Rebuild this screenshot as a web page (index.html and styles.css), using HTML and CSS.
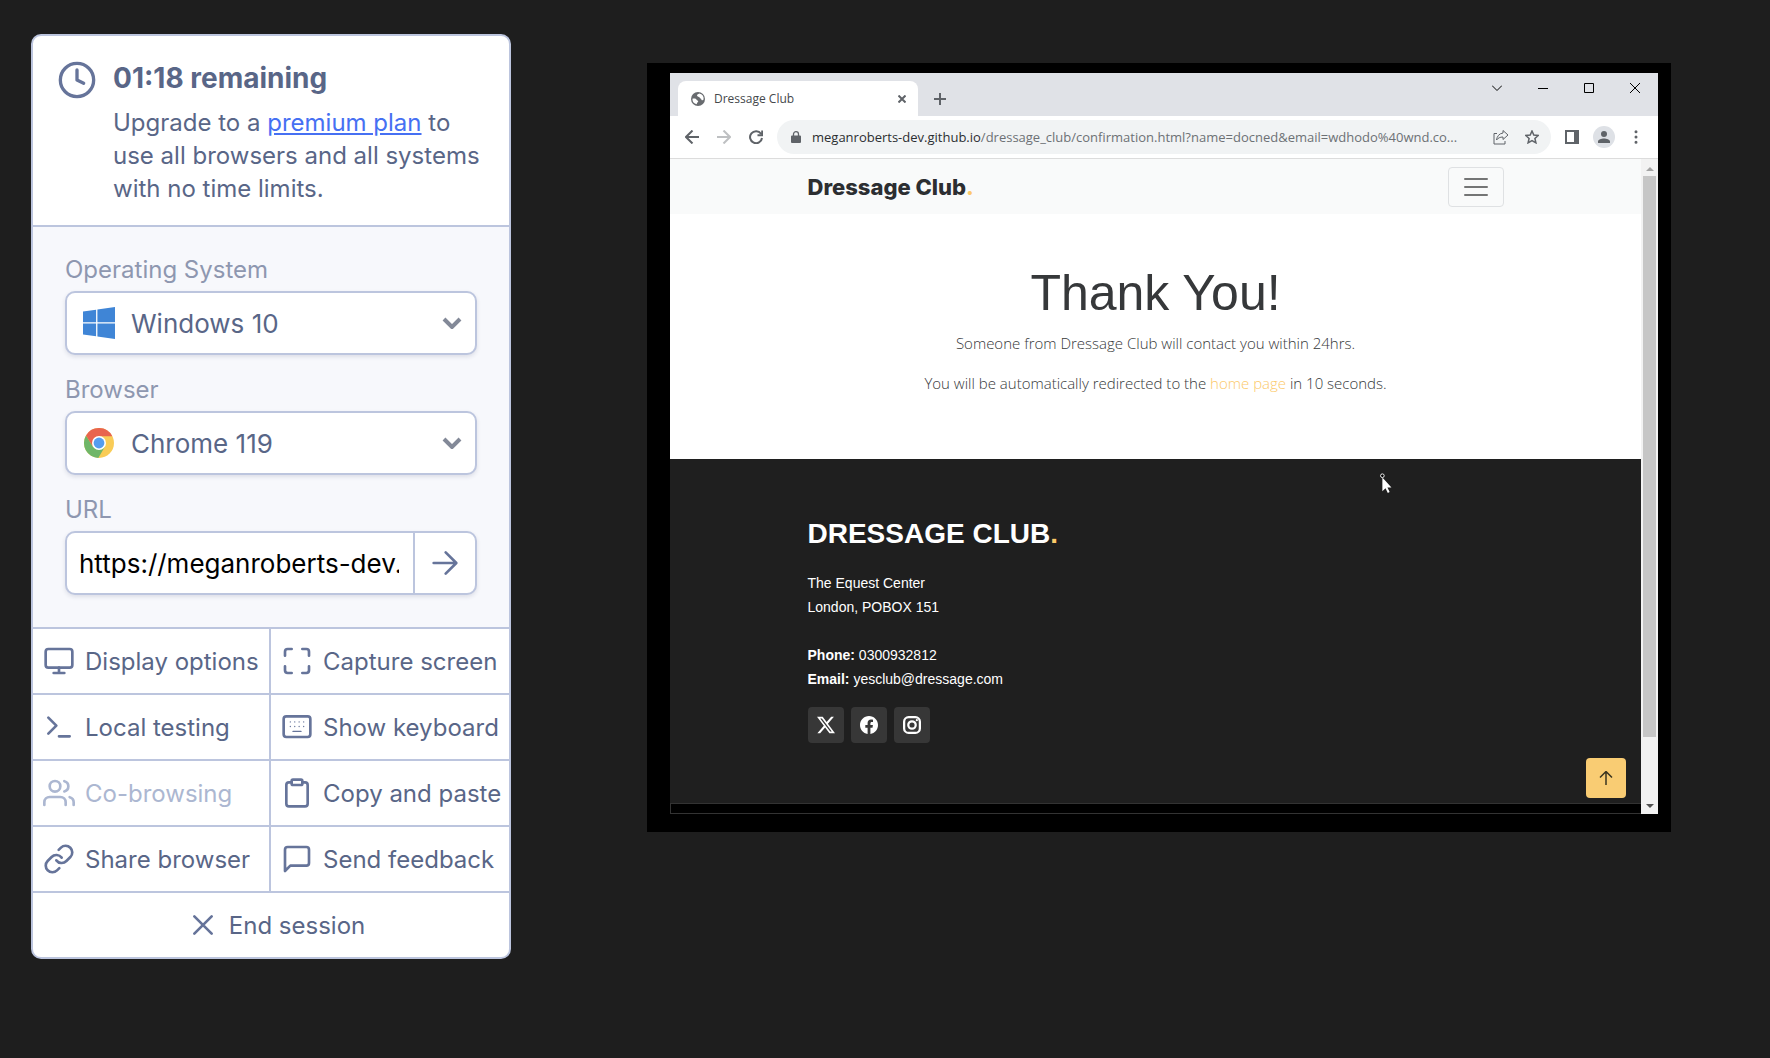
FILE: index.html
```html
<!DOCTYPE html>
<html lang="en">
<head>
<meta charset="utf-8">
<title>Live browser session</title>
<meta name="viewport" content="width=device-width, initial-scale=1">
<link rel="stylesheet" href="styles.css">
</head>
<body class="session">
<aside class="panel">
  <section class="notice">
    <svg class="notice-icon" viewBox="0 0 24 24"><circle cx="12" cy="12" r="10"/><path d="M12 6v6l4 2"/></svg>
    <div class="notice-body">
      <h1 class="notice-title">01:18 remaining</h1>
      <p class="notice-text">Upgrade to a <a class="notice-link" href="#">premium plan</a> to use all browsers and all systems with no time limits.</p>
    </div>
  </section>

  <form class="settings">
    <div class="field">
      <label class="label" for="os">Operating System</label>
      <div class="control">
        <svg class="logo" viewBox="0 0 32 32"><path fill="#3f85d6" d="M0 4.600 13.100 2.800V15.300H0zM14.400 2.600 32 0V15.300H14.400zM0 16.600H13.100V29.200L0 27.400zM14.400 16.600H32V32L14.400 29.400z"/></svg>
        <select class="select" id="os"><option>Windows 10</option></select>
        <svg class="chevron" viewBox="0 0 20 12"><path d="M2 2l8 8 8-8"/></svg>
      </div>
    </div>
    <div class="field">
      <label class="label" for="browser">Browser</label>
      <div class="control">
        <svg class="logo" viewBox="0 0 32 32"><circle cx="16" cy="16" r="15" fill="#f9cc57"/><path fill="#e8644f" d="M16 16 3 8.500A15 15 0 0 1 29.300 9.200H16z"/><path fill="#6fb668" d="M16 16 9.900 19.500 3 8.500A15 15 0 0 0 15.300 31L22 19.500z"/><path fill="#e8644f" d="M3 8.500 9.900 19.500 12 12z"/><circle cx="16" cy="16" r="7" fill="#fff"/><circle cx="16" cy="16" r="5.400" fill="#559df0"/></svg>
        <select class="select" id="browser"><option>Chrome 119</option></select>
        <svg class="chevron" viewBox="0 0 20 12"><path d="M2 2l8 8 8-8"/></svg>
      </div>
    </div>
    <div class="field">
      <label class="label" for="url">URL</label>
      <div class="control control-url">
        <input class="url" id="url" type="text" value="https://meganroberts-dev.github.io/dressage_club/">
        <button class="go" type="button" aria-label="Go"><svg class="icon" viewBox="0 0 24 24"><path d="M3.500 12h16.500M12.500 4l8 8-8 8"/></svg></button>
      </div>
    </div>
  </form>

  <div class="actions">
    <button class="action" type="button"><svg class="icon" viewBox="0 0 24 24"><rect x="2" y="3" width="20" height="14" rx="2"/><path d="M8 21h8M12 17v4"/></svg>Display options</button>
    <button class="action" type="button"><svg class="icon" viewBox="0 0 24 24"><path d="M8 3H5a2 2 0 0 0-2 2v3M21 8V5a2 2 0 0 0-2-2h-3M16 21h3a2 2 0 0 0 2-2v-3M3 16v3a2 2 0 0 0 2 2h3"/></svg>Capture screen</button>
    <button class="action" type="button"><svg class="icon" viewBox="0 0 24 24"><path d="M4 17l6-6-6-6M12 19h8"/></svg>Local testing</button>
    <button class="action" type="button"><svg class="icon" viewBox="0 0 24 24"><rect x="2" y="4" width="20" height="15.500" rx="2"/><path class="keys" d="M7 8.200h.01M10.300 8.200h.01M13.600 8.200h.01M17 8.200h.01M7 11.600h.01M10.300 11.600h.01M13.600 11.600h.01M17 11.600h.01M9 15.300h6"/></svg>Show keyboard</button>
    <button class="action" type="button" disabled><svg class="icon" viewBox="0 0 24 24"><path d="M17 21v-2a4 4 0 0 0-4-4H5a4 4 0 0 0-4 4v2M23 21v-2a4 4 0 0 0-3-3.870M16 3.130a4 4 0 0 1 0 7.750"/><circle cx="9" cy="7" r="4"/></svg>Co-browsing</button>
    <button class="action" type="button"><svg class="icon" viewBox="0 0 24 24"><path d="M16 4h2a2 2 0 0 1 2 2v14a2 2 0 0 1-2 2H6a2 2 0 0 1-2-2V6a2 2 0 0 1 2-2h2"/><rect x="8" y="2" width="8" height="4" rx="1"/></svg>Copy and paste</button>
    <button class="action" type="button"><svg class="icon" viewBox="0 0 24 24"><path d="M10 13a5 5 0 0 0 7.540.540l3-3a5 5 0 0 0-7.070-7.070l-1.720 1.710M14 11a5 5 0 0 0-7.540-.540l-3 3a5 5 0 0 0 7.070 7.070l1.710-1.710"/></svg>Share browser</button>
    <button class="action" type="button"><svg class="icon" viewBox="0 0 24 24"><path d="M21 15a2 2 0 0 1-2 2H7l-4 4V5a2 2 0 0 1 2-2h14a2 2 0 0 1 2 2z"/></svg>Send feedback</button>
    <button class="action action-end" type="button"><svg class="icon" viewBox="0 0 24 24"><path d="M18.500 5.500l-13 13M5.500 5.500l13 13"/></svg>End session</button>
  </div>
</aside>

<main class="screen">
  <div class="window">
    <div class="tabstrip">
      <div class="tab">
        <svg class="tab-icon" viewBox="0 0 14 14"><circle cx="7" cy="7" r="7" fill="#686b6f"/><path fill="#fff" d="M8.200 1.400c-.9.700-2 .9-2.200 2 .2 1.300 2.300 1 2.600 2.200.1 1 1.700.9 1.800 2 0 1.300 1.100.6 2.200-.2A5.600 5.600 0 0 0 8.200 1.400zM1.400 6.800c1.500-.3 3.600-.4 4 .8.200.9 1.800.8 1.800 2 0 .9-1.500.8-1.400 2.700A5.600 5.600 0 0 1 1.400 6.800z"/></svg>
        <span class="tab-title">Dressage Club</span>
        <button class="chrome-btn" type="button" aria-label="Close tab"><svg class="glyph-8" viewBox="0 0 8 8"><path d="M.5.500l7 7M7.500.500l-7 7"/></svg></button>
      </div>
      <button class="chrome-btn new-tab" type="button" aria-label="New tab"><svg class="glyph-12" viewBox="0 0 12 12"><path d="M6 0v12M0 6h12"/></svg></button>
      <div class="window-controls">
        <button class="chrome-btn" type="button" aria-label="Search tabs"><svg class="glyph-10" viewBox="0 0 10 10"><path d="M0 2.500l5 5 5-5"/></svg></button>
        <button class="chrome-btn" type="button" aria-label="Minimize"><svg class="glyph-10" viewBox="0 0 10 10"><path d="M0 5.500h10"/></svg></button>
        <button class="chrome-btn" type="button" aria-label="Maximize"><svg class="glyph-10" viewBox="0 0 10 10"><path d="M.5.500h9v9h-9z"/></svg></button>
        <button class="chrome-btn" type="button" aria-label="Close"><svg class="glyph-10" viewBox="0 0 10 10"><path d="M0 0l10 10M10 0L0 10"/></svg></button>
      </div>
    </div>

    <div class="toolbar">
      <div class="history">
        <button class="chrome-btn" type="button" aria-label="Back"><svg class="glyph-14" viewBox="0 0 14 14"><path d="M14 7H1M7.500.500 1 7l6.500 6.500"/></svg></button>
        <button class="chrome-btn faded" type="button" aria-label="Forward"><svg class="glyph-14" viewBox="0 0 14 14"><path d="M0 7h13M6.500.500 13 7l-6.500 6.500"/></svg></button>
        <button class="chrome-btn" type="button" aria-label="Reload"><svg class="glyph-14" viewBox="0 0 14 14"><path d="M12 3.800A6 6 0 1 0 13 8M13.200.500v4.700H8.500"/></svg></button>
      </div>
      <div class="omnibox">
        <svg class="lock" viewBox="0 0 10 12"><path fill="#5f6368" d="M1 4.500h8a1 1 0 0 1 1 1V11a1 1 0 0 1-1 1H1a1 1 0 0 1-1-1V5.500a1 1 0 0 1 1-1z"/><path fill="none" stroke="#5f6368" stroke-width="1.300" d="M2.500 5V3a2.500 2.300 0 0 1 5 0v2"/></svg>
        <span class="address"><span class="host">meganroberts-dev.github.io</span>/dressage_club/confirmation.html?name=docned&amp;email=wdhodo%40wnd.co...</span>
        <div class="omnibox-actions">
          <button class="chrome-btn" type="button" aria-label="Share"><svg class="glyph-16 thin" viewBox="0 0 16 16"><path d="M4 4.500H1V15h11v-3M10 1.500l5 4.500-5 4.500V8c-3 0-5 1-6.500 3 .5-3.500 2.500-6.500 6.500-7z"/></svg></button>
          <button class="chrome-btn" type="button" aria-label="Bookmark"><svg class="glyph-14 star" viewBox="0 0 14 14"><path d="M7 1l1.800 4.100 4.400.4-3.300 3 1 4.300L7 10.500l-3.900 2.300 1-4.300-3.300-3 4.400-.4z"/></svg></button>
        </div>
      </div>
      <div class="extras">
        <button class="chrome-btn" type="button" aria-label="Side panel"><svg class="glyph-14" viewBox="0 0 14 14"><path d="M1 1h12v12H1z"/><path fill="#5f6368" d="M10 1h3v12h-3z"/></svg></button>
        <button class="chrome-btn avatar" type="button" aria-label="Profile"><svg class="glyph-12" viewBox="0 0 12 12"><path fill="#5f6368" stroke="none" d="M6 0a3 3 0 1 1 0 6 3 3 0 0 1 0-6zM0 12V10.500C0 8.500 3.500 7.500 6 7.500s6 1 6 3V12z"/></svg></button>
        <button class="chrome-btn" type="button" aria-label="Menu"><svg class="glyph-14" viewBox="0 0 14 14"><path fill="#5f6368" stroke="none" d="M7 .2a1.500 1.500 0 1 1 0 3 1.500 1.500 0 0 1 0-3zM7 5.500a1.500 1.500 0 1 1 0 3 1.500 1.500 0 0 1 0-3zM7 10.800a1.500 1.500 0 1 1 0 3 1.500 1.500 0 0 1 0-3z"/></svg></button>
      </div>
    </div>

    <div class="viewport">
      <div class="page">
        <header class="site-nav">
          <div class="container nav-row">
            <a class="brand" href="#">Dressage Club<span class="accent">.</span></a>
            <button class="toggler" type="button" aria-label="Toggle navigation"><svg class="toggler-icon" viewBox="0 0 24 20"><path d="M1 2h22M1 10h22M1 18h22"/></svg></button>
          </div>
        </header>
        <section class="thanks">
          <h2 class="thanks-title">Thank You!</h2>
          <p class="thanks-text">Someone from Dressage Club will contact you within 24hrs.</p>
          <p class="thanks-text">You will be automatically redirected to the <a class="accent" href="#">home page</a> in 10 seconds.</p>
        </section>
        <footer class="site-footer">
          <div class="container">
            <h3 class="footer-title">DRESSAGE CLUB<span class="accent">.</span></h3>
            <p class="footer-text">The Equest Center<br>London, POBOX 151<br><br><strong>Phone:</strong> 0300932812<br><strong>Email:</strong> yesclub@dressage.com</p>
            <div class="social">
              <a class="social-link" href="#" aria-label="X"><svg class="social-icon" viewBox="0 0 16 16"><path d="M12.600.750h2.450l-5.360 6.140L16 15.250h-4.940l-3.860-5.070-4.430 5.070H.320l5.730-6.570L0 .750h5.060l3.490 4.630zm-.860 13.030h1.360L4.320 2.150H2.860z"/></svg></a>
              <a class="social-link" href="#" aria-label="Facebook"><svg class="social-icon" viewBox="0 0 16 16"><path d="M16 8.050C16 3.600 12.420 0 8 0S0 3.600 0 8.050C0 12.070 2.930 15.400 6.750 16v-5.620H4.720V8.050h2.030V6.280c0-2.020 1.190-3.130 3.020-3.130.870 0 1.790.160 1.790.160v1.980h-1.010c-.990 0-1.300.620-1.300 1.260v1.500h2.220l-.350 2.330H9.250V16C13.070 15.400 16 12.070 16 8.050z"/></svg></a>
              <a class="social-link" href="#" aria-label="Instagram"><svg class="social-icon outlined" viewBox="0 0 16 16"><rect x="1" y="1" width="14" height="14" rx="4"/><circle cx="8" cy="8" r="3.300"/><circle class="dot" cx="12.300" cy="3.700" r="1"/></svg></a>
            </div>
          </div>
          <a class="back-top" href="#" aria-label="Back to top"><svg class="glyph-14 dark" viewBox="0 0 14 14"><path d="M7 14V.800M1 6.500l6-6 6 6"/></svg></a>
        </footer>
        <div class="taskbar"></div>
      </div>
      <div class="scrollbar">
        <svg class="scroll-arrow" viewBox="0 0 8 4"><path fill="#a3a3a3" d="M0 4l4-4 4 4z"/></svg>
        <div class="scroll-track"><div class="scroll-thumb"></div></div>
        <svg class="scroll-arrow" viewBox="0 0 8 4"><path fill="#505050" d="M0 0l4 4 4-4z"/></svg>
      </div>
    </div>
  </div>
  <svg class="cursor" viewBox="0 0 14 22"><circle cx="3" cy="3" r="2" fill="#000" stroke="#fff"/><path fill="#fff" d="M3 5v15l3.500-3.200L9 22l2-1-2.400-5H13z"/></svg>
</main>
</body>
</html>
```

FILE: styles.css
```css
* { box-sizing: border-box; }

.session {
  margin: 0;
  min-height: 100vh;
  padding: 34px 99px 34px 31px;
  display: grid;
  grid-template-columns: 480px minmax(0, 1fr);
  column-gap: 136px;
  align-items: start;
  background: #1e1e1e;
  color: #596687;
  font-family: Inter, sans-serif;
}

button, input, select {
  margin: 0;
  border: 0;
  padding: 0;
  background: none;
  color: inherit;
  font: inherit;
}

svg { display: block; flex: none; }

/* Control panel */
.panel {
  border: 2px solid #bcc5de;
  border-radius: 10px;
  overflow: hidden;
  background: #fff;
  font-size: 24px;
}

.icon, .notice-icon {
  width: 32px;
  height: 32px;
  fill: none;
  stroke: #66749a;
  stroke-width: 2;
  stroke-linecap: round;
  stroke-linejoin: round;
}

.notice { display: flex; gap: 16px; padding: 24px 24px 20px; }
.notice-icon { width: 40px; height: 40px; }
.notice-title { margin: 0 0 10px; font-size: 28px; line-height: 36px; font-weight: 700; }
.notice-text { margin: 0; line-height: 33px; }
.notice-link { color: #4670f3; }

.settings {
  display: grid;
  grid-template-columns: minmax(0, 1fr);
  gap: 18px;
  padding: 26px 32px 32px;
  border-top: 2px solid #bcc5de;
  border-bottom: 2px solid #bcc5de;
  background: #f7f8fc;
}
.label { display: block; margin-bottom: 4px; line-height: 34px; color: #8e97b0; }
.control {
  display: flex;
  align-items: center;
  height: 64px;
  padding: 0 13px 0 16px;
  border: 2px solid #bcc5de;
  border-radius: 10px;
  background: #fff;
  box-shadow: 0 2px 4px rgba(30, 40, 80, .12);
  font-size: 26px;
}
.logo { width: 32px; height: 32px; }
.select { flex: 1; min-width: 0; height: 60px; margin-left: 16px; appearance: none; outline: 0; }
.chevron { width: 20px; height: 12px; fill: none; stroke: #838998; stroke-width: 4; }
.control-url { padding: 0; }
.url { flex: 1; min-width: 0; margin: 0 14px 0 12px; height: 60px; color: #000; outline: 0; }
.go { display: grid; place-items: center; width: 62px; height: 60px; border-left: 2px solid #bcc5de; }

.actions { display: grid; grid-template-columns: 236px 1fr; gap: 2px; background: #bcc5de; }
.action {
  display: flex;
  align-items: center;
  gap: 10px;
  height: 64px;
  padding-left: 10px;
  background: #fff;
  white-space: nowrap;
}
.action:disabled { color: #acb7d1; }
.action:disabled .icon { stroke: #acb7d1; }
.action-end { grid-column: 1 / -1; justify-content: center; }
.keys { stroke-width: 1; }

/* Remote desktop */
.screen { position: relative; margin-top: 29px; padding: 10px 13px 18px 23px; background: #000; }
.window { background: #fff; font-family: "Open Sans", sans-serif; }

.chrome-btn { display: grid; place-items: center; flex: none; }
.chrome-btn svg, .dark { fill: none; stroke: #5f6368; stroke-width: 2; }
.glyph-8 { width: 8px; height: 8px; }
.glyph-10 { width: 10px; height: 10px; }
.glyph-12 { width: 12px; height: 12px; }
.glyph-14 { width: 14px; height: 14px; }
.glyph-16 { width: 16px; height: 16px; }
.chrome-btn .thin { stroke-width: 1; }
.chrome-btn .star { stroke-width: 1.500; }
.faded { opacity: .4; }

.tabstrip { display: flex; height: 43px; padding-left: 8px; background: #e0e2e7; }
.tab {
  display: flex;
  align-items: center;
  gap: 9px;
  width: 240px;
  height: 35px;
  margin-top: 8px;
  padding: 0 12px 0 13px;
  border-radius: 8px 8px 0 0;
  background: #fff;
}
.tab-icon { width: 14px; height: 14px; }
.tab-title { flex: 1; font-size: 12px; color: #45484c; }
.new-tab { margin: 8px 0 0 16px; }
.window-controls { display: flex; gap: 36px; height: 30px; margin-left: auto; padding-right: 18px; }
.window-controls .chrome-btn svg { stroke: #000; stroke-width: 1; }

.toolbar {
  display: flex;
  align-items: center;
  gap: 14px;
  height: 43px;
  padding: 0 15px;
  border-bottom: 1px solid #dcdcdc;
}
.history { display: flex; gap: 18px; }
.omnibox {
  display: flex;
  flex: 1;
  align-items: center;
  gap: 11px;
  min-width: 0;
  height: 34px;
  padding: 0 12px 0 14px;
  border-radius: 17px;
  background: #f1f3f4;
}
.omnibox-actions { display: flex; align-items: center; gap: 16px; }
.lock { width: 10px; height: 12px; }
.address { flex: 1; min-width: 0; overflow: hidden; white-space: nowrap; font-size: 13px; color: #6d7175; }
.host { color: #2c2e31; }
.extras { display: flex; align-items: center; gap: 14px; }
.avatar { width: 22px; height: 22px; border-radius: 50%; background: #dee1e6; }

.viewport { display: flex; }
.page { flex: 1; min-width: 0; font-family: "Liberation Sans", sans-serif; }
.container { max-width: 720px; margin: 0 auto; padding: 0 12px; }
.site-nav { background: #f9fafa; }
.nav-row { display: flex; align-items: center; justify-content: space-between; height: 55px; }
.brand { font: 800 22px/30px Inter, sans-serif; color: #2c2e31; text-decoration: none; }
.accent { color: #fcc969; text-decoration: none; }
.toggler { display: grid; place-items: center; width: 56px; height: 40px; border: 1px solid #dfe1e3; border-radius: 4px; }
.toggler-icon { width: 24px; height: 20px; fill: none; stroke: #747575; stroke-width: 2; stroke-linecap: round; }

.thanks { padding: 49px 12px 64px; text-align: center; color: #36383a; }
.thanks-title { margin: 0 0 8px; font-size: 50px; line-height: 60px; font-weight: 400; }
.thanks-text { margin: 0 0 16px; font: 300 15px/24px "Open Sans", sans-serif; }
.thanks-text:last-child { margin: 0; }

.site-footer { position: relative; padding: 58px 0 60px; background: #1f1f1f; color: #fff; }
.footer-title { margin: 0 0 20px; font-size: 28px; line-height: 34px; }
.footer-text { margin: 0 0 16px; font-size: 14px; line-height: 24px; }
.social { display: flex; gap: 7px; }
.social-link { display: grid; place-items: center; width: 36px; height: 36px; border-radius: 4px; background: #373737; }
.social-icon { width: 18px; height: 18px; fill: #fff; }
.outlined { fill: none; stroke: #fff; stroke-width: 2; }
.dot { fill: #fff; stroke: none; }
.back-top {
  position: absolute;
  right: 15px;
  bottom: 5px;
  display: grid;
  place-items: center;
  width: 40px;
  height: 40px;
  border-radius: 4px;
  background: #f9cc73;
}
.dark { stroke: #3a3420; stroke-width: 1.500; }
.taskbar { height: 11px; border: 1px solid #333; border-right: 0; background: #000; }

.scrollbar { display: flex; flex-direction: column; align-items: center; width: 17px; padding: 8px 0 6px; background: #f2f2f2; }
.scroll-arrow { width: 8px; height: 4px; }
.scroll-track { flex: 1; width: 13px; margin: 5px 0; }
.scroll-thumb { height: 90%; background: #c6c6c6; }

.cursor { position: absolute; left: 732px; top: 410px; width: 14px; height: 20px; }
```
